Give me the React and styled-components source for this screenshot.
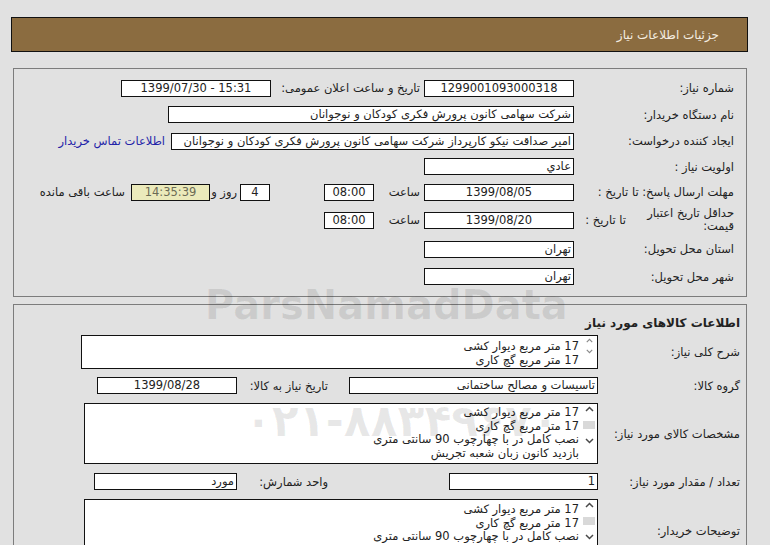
import React from "react";
import styled, { createGlobalStyle } from "styled-components";

const GlobalStyle = createGlobalStyle`
  body {
    margin: 0;
    background: #e1e1e1;
    font-family: "DejaVu Sans", "Liberation Sans", sans-serif;
    font-size: 11.5px;
    color: #222;
  }
`;

const Page = styled.div`
  position: relative;
  width: 748px;
  padding: 17px 0 0 11px;
  box-sizing: border-box;
  direction: rtl;
  height: 545px;
  overflow: hidden;
`;

const Header = styled.div`
  height: 35px;
  box-sizing: border-box;
  border: 1px solid #111;
  background: #8b6c40;
  color: #f4ede0;
  display: flex;
  align-items: center;
  padding-right: 28px;
  font-size: 12px;
`;

const Section = styled.div`
  margin: ${(p) => p.$top}px 1px 0 2px;
  border: 1px solid #7c7c7c;
  padding: ${(p) => p.$pad};
  box-sizing: border-box;
  height: ${(p) => (p.$height ? `${p.$height}px` : "auto")};
`;

const Row = styled.div`
  display: flex;
  align-items: center;
  height: ${(p) => p.$h}px;
  margin-top: ${(p) => p.$mt || 0}px;
`;

const Label = styled.div`
  width: ${(p) => p.$w}px;
  flex-shrink: 0;
  white-space: nowrap;
`;

const WrapLabel = styled.div`
  width: ${(p) => p.$w}px;
  flex-shrink: 0;
  line-height: 13px;
`;

const Sub = styled.div`
  width: ${(p) => (p.$w ? `${p.$w}px` : "auto")};
  flex-shrink: 0;
  padding-right: ${(p) => p.$pr || 0}px;
  box-sizing: border-box;
  white-space: nowrap;
`;

const Field = styled.div`
  width: ${(p) => p.$w}px;
  height: 17px;
  box-sizing: border-box;
  flex-shrink: 0;
  border: 1px solid #111;
  background: ${(p) => (p.$yellow ? "#ebeabb" : "#fff")};
  color: ${(p) => (p.$yellow ? "#6b6b55" : "#222")};
  text-align: ${(p) => (p.$center ? "center" : "right")};
  direction: ${(p) => (p.$ltr ? "ltr" : "rtl")};
  padding: 0 2px;
  line-height: 15px;
  white-space: nowrap;
  overflow: hidden;
  margin-right: ${(p) => p.$mr || 0}px;
`;

const Link = styled.a`
  color: #2323a8;
  text-decoration: none;
  margin-right: 6px;
  white-space: nowrap;
`;

const Title = styled.div`
  font-weight: bold;
  font-size: 12px;
  line-height: 16px;
  padding: 10px 0 4px;
`;

const Area = styled.div`
  width: ${(p) => p.$w}px;
  height: ${(p) => p.$h}px;
  box-sizing: border-box;
  border: 1px solid #111;
  background: #fff;
  display: flex;
  overflow: hidden;
  flex-shrink: 0;
`;

const Scroll = styled.div`
  width: 14px;
  height: ${(p) => p.$h}px;
  margin: 2px 1px 0 0;
  display: flex;
  flex-direction: column;
  align-items: center;
  justify-content: space-between;
  flex-shrink: 0;
`;

const Thumb = styled.div`
  width: 12px;
  height: 8px;
  background: #d9d9d9;
`;

const Lines = styled.div`
  flex: 1;
  padding: ${(p) => p.$pt}px 3px 0 0;
  line-height: ${(p) => p.$lh}px;
  white-space: nowrap;
`;

const Watermark = styled.div`
  position: absolute;
  pointer-events: none;
  left: ${(p) => p.$x}px;
  top: ${(p) => p.$y}px;
  font-size: ${(p) => p.$size}px;
  font-weight: bold;
  color: rgba(0, 0, 0, 0.09);
  direction: ltr;
  white-space: nowrap;
  font-family: "DejaVu Sans", sans-serif;
`;

const Arrow = ({ up, small }) => (
  <svg width={small ? 7 : 9} height={small ? 5 : 6} viewBox="0 0 9 6">
    <path
      d={up ? "M1 5 L4.5 1.5 L8 5" : "M1 1 L4.5 4.5 L8 1"}
      fill="none"
      stroke={small ? "#8a8a8a" : "#4a4a4a"}
      strokeWidth="1.5"
    />
  </svg>
);

const TextBox = ({ w, h, lines, pt, lh, bar, small }) => (
  <Area $w={w} $h={h}>
    <Scroll $h={bar}>
      <Arrow up small={small} />
      {!small && <Thumb />}
      <Arrow small={small} />
    </Scroll>
    <Lines $pt={pt} $lh={lh}>
      {lines.map((l) => (
        <div key={l}>{l}</div>
      ))}
    </Lines>
  </Area>
);

const items = [
  "17 متر مربع دیوار کشی",
  "17 متر مربع گچ کاری",
  "نصب کامل در با چهارچوب 90 سانتی متری",
  "بازدید کانون زبان شعبه تجریش",
];

export default function App() {
  return (
    <>
      <GlobalStyle />
      <Page>
        <Header>جزئیات اطلاعات نیاز</Header>

        <Section $top={16} $pad="6px 12px 0 0" $height={229}>
          <Row $h={26}>
            <Label $w={160}>شماره نیاز:</Label>
            <Field $w={150} $center>1299001093000318</Field>
            <Sub $w={153} $pr={4}>تاریخ و ساعت اعلان عمومی:</Sub>
            <Field $w={150} $center $ltr>1399/07/30 - 15:31</Field>
          </Row>
          <Row $h={27}>
            <Label $w={160}>نام دستگاه خریدار:</Label>
            <Field $w={406}>شرکت سهامی کانون پرورش فکری کودکان و نوجوانان</Field>
          </Row>
          <Row $h={26}>
            <Label $w={160}>ایجاد کننده درخواست:</Label>
            <Field $w={403}>
              امیر صداقت نیکو کارپرداز شرکت سهامی کانون پرورش فکری کودکان و نوجوانان
            </Field>
            <Link href="#">اطلاعات تماس خریدار</Link>
          </Row>
          <Row $h={25}>
            <Label $w={160}>اولویت نیاز :</Label>
            <Field $w={150}>عادي</Field>
          </Row>
          <Row $h={26}>
            <Label $w={160}>مهلت ارسال پاسخ: تا تاریخ :</Label>
            <Field $w={150} $center>1399/08/05</Field>
            <Sub $w={50} $pr={4}>ساعت</Sub>
            <Field $w={50} $center>08:00</Field>
            <Field $w={30} $mr={54} $center>4</Field>
            <Sub $w={30} $pr={3}>روز و</Sub>
            <Field $w={79} $yellow $center>14:35:39</Field>
            <Sub $pr={6}>ساعت باقی مانده</Sub>
          </Row>
          <Row $h={30}>
            <WrapLabel $w={108}>حداقل تاریخ اعتبار قیمت:</WrapLabel>
            <Sub $w={52}>تا تاریخ :</Sub>
            <Field $w={150} $center>1399/08/20</Field>
            <Sub $w={50} $pr={4}>ساعت</Sub>
            <Field $w={50} $center>08:00</Field>
          </Row>
          <Row $h={28}>
            <Label $w={160}>استان محل تحویل:</Label>
            <Field $w={150}>تهران</Field>
          </Row>
          <Row $h={27}>
            <Label $w={160}>شهر محل تحویل:</Label>
            <Field $w={150}>تهران</Field>
          </Row>
        </Section>

        <Section $top={7} $pad="0 6px 0 0">
          <Title>اطلاعات کالاهای مورد نیاز</Title>
          <Row $h={34}>
            <Label $w={142}>شرح کلی نیاز:</Label>
            <TextBox w={517} h={34} lines={items.slice(0, 2)} pt={3} lh={14} bar={16} small />
          </Row>
          <Row $h={17} $mt={8}>
            <Label $w={142}>گروه کالا:</Label>
            <Field $w={249}>تاسیسات و مصالح ساختمانی</Field>
            <Sub $w={112} $pr={21}>تاریخ نیاز به کالا:</Sub>
            <Field $w={140} $center>1399/08/28</Field>
          </Row>
          <Row $h={61} $mt={9}>
            <Label $w={142}>مشخصات کالای مورد نیاز:</Label>
            <TextBox w={514} h={61} lines={items} pt={2} lh={13.7} bar={38} />
          </Row>
          <Row $h={17} $mt={9}>
            <Label $w={142}>تعداد / مقدار مورد نیاز:</Label>
            <Field $w={149}>1</Field>
            <Sub $w={212} $pr={121}>واحد شمارش:</Sub>
            <Field $w={143}>مورد</Field>
          </Row>
          <Row $h={64} $mt={9}>
            <Label $w={142}>توضیحات خریدار:</Label>
            <TextBox w={514} h={64} lines={items.slice(0, 3)} pt={3} lh={13.7} bar={38} />
          </Row>
        </Section>

        <Watermark $x={205} $y={282} $size={40}>ParsNamadData</Watermark>
        <Watermark $x={245} $y={395} $size={44}>۰۲۱-۸۸۳۴۹۶۷۰</Watermark>
      </Page>
    </>
  );
}
